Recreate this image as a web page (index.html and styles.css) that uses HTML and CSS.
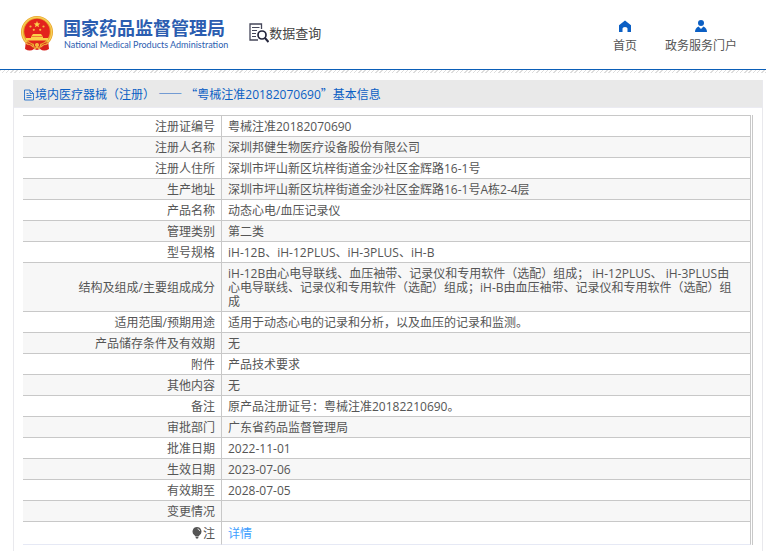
FILE: index.html
```html
<!DOCTYPE html>
<html lang="zh-CN">
<head>
<meta charset="utf-8">
<meta name="viewport" content="width=device-width, initial-scale=1">
<title>国家药品监督管理局 数据查询</title>
<link rel="stylesheet" href="styles.css">
</head>
<body>
<header class="site-header">
  <div class="brand">
    <svg class="emblem" viewBox="0 0 32 35" aria-hidden="true">
      <path d="M5 24 L4 33 Q9 36 13 33 L16 34 L19 33 Q23 36 28 33 L27 24Z" fill="#d8201c"/>
      <circle cx="16" cy="16" r="16" fill="#e9a52c"/>
      <circle cx="16" cy="16" r="14.6" fill="none" stroke="#f7cf58" stroke-width="1.2"/>
      <circle cx="16" cy="15.500" r="12.800" fill="#e3221d"/>
      <path d="M16 5l.9 2.300 2.400.1-1.900 1.500.7 2.400-2.100-1.400-2.100 1.400.7-2.400-1.900-1.500 2.400-.1z" fill="#fbd04a"/>
      <g fill="#f6b83e"><circle cx="9.500" cy="10.500" r="1.100"/><circle cx="12.800" cy="13.800" r="1.100"/><circle cx="19.200" cy="13.800" r="1.100"/><circle cx="22.500" cy="10.500" r="1.100"/></g>
      <path d="M12 18h8l1.500 2h-11zM10 20.500h12V22h5v2.500H5V22h5z" fill="#fbd04a"/>
      <path d="M5 26q5.500 1 8 5l-5 2.500Q8 29 5 26zM27 26q-5.500 1-8 5l5 2.500Q24 29 27 26z" fill="#d8201c"/>
      <circle cx="16" cy="29" r="2.600" fill="#f6b83e" stroke="#d8201c"/>
      <path d="M5 27.500q5 1 7.500 3.500M27 27.500q-5 1-7.500 3.500M13 33l3-1.500 3 1.500" fill="none" stroke="#f6b83e" stroke-width="1.200"/>
    </svg>
    <div class="brand-text">
      <span class="brand-cn">国家药品监督管理局</span>
      <span class="brand-en">National Medical Products Administration</span>
    </div>
  </div>
  <div class="section-title">
    <svg class="search-doc" viewBox="0 0 20 20" aria-hidden="true">
      <path d="M12.500 6V1H1v16h8" fill="none" stroke="#45475a" stroke-width="1.300"/>
      <path d="M3 4.500h7.500M3 7.500h5M3 10.500h4M3 13.500h4" stroke="#45475a" stroke-width="1.200"/>
      <circle cx="13" cy="12" r="4" fill="#fff" stroke="#25263c" stroke-width="1.700"/>
      <path d="M16 15l3.500 4" stroke="#25263c" stroke-width="2"/>
    </svg>
    <span>数据查询</span>
  </div>
  <nav class="site-nav">
    <a href="#"><svg viewBox="0 0 12 12" aria-hidden="true"><path d="M6 0.500l6 4.800V12H8.500V8.500Q8.500 7 6 7T3.500 8.500V12H0V5.300z" fill="#0b5fc4"/></svg>首页</a>
    <a href="#"><svg viewBox="0 0 12 12" aria-hidden="true"><circle cx="6" cy="3" r="3" fill="#0b5fc4"/><path d="M0 12q0-4 3.500-5.500L6 9l2.500-2.500Q12 8 12 12z" fill="#0b5fc4"/></svg>政务服务门户</a>
  </nav>
</header>

<main class="panel">
  <h1 class="panel-title">
    <svg viewBox="0 0 10 12" aria-hidden="true"><path d="M.5 1H6l3.500 3.500V11h-9zM6 1v3.500h3.500M2.500 6.500h5M2.500 8.500h5M2.500 4.500h2" fill="none" stroke="#0b5fc4" stroke-width=".8"/></svg>
    <span>境内医疗器械（注册） <span class="cjk">——</span> <span class="cjk">“</span>粤械注准20182070690<span class="cjk">”</span>基本信息</span>
  </h1>
  <div class="panel-body">
    <table class="details">
      <tbody>
        <tr><th scope="row">注册证编号</th><td>粤械注准20182070690</td></tr>
        <tr><th scope="row">注册人名称</th><td>深圳邦健生物医疗设备股份有限公司</td></tr>
        <tr><th scope="row">注册人住所</th><td>深圳市坪山新区坑梓街道金沙社区金辉路16-1号</td></tr>
        <tr><th scope="row">生产地址</th><td>深圳市坪山新区坑梓街道金沙社区金辉路16-1号A栋2-4层</td></tr>
        <tr><th scope="row">产品名称</th><td>动态心电/血压记录仪</td></tr>
        <tr><th scope="row">管理类别</th><td>第二类</td></tr>
        <tr><th scope="row">型号规格</th><td>iH-12B、iH-12PLUS、iH-3PLUS、iH-B</td></tr>
        <tr><th scope="row">结构及组成/主要组成成分</th><td>iH-12B由心电导联线、血压袖带、记录仪和专用软件（选配）组成； iH-12PLUS、 iH-3PLUS由心电导联线、记录仪和专用软件（选配）组成；iH-B由血压袖带、记录仪和专用软件（选配）组成</td></tr>
        <tr><th scope="row">适用范围/预期用途</th><td>适用于动态心电的记录和分析，以及血压的记录和监测。</td></tr>
        <tr><th scope="row">产品储存条件及有效期</th><td>无</td></tr>
        <tr><th scope="row">附件</th><td>产品技术要求</td></tr>
        <tr><th scope="row">其他内容</th><td>无</td></tr>
        <tr><th scope="row">备注</th><td>原产品注册证号：粤械注准20182210690。</td></tr>
        <tr><th scope="row">审批部门</th><td>广东省药品监督管理局</td></tr>
        <tr><th scope="row">批准日期</th><td>2022-11-01</td></tr>
        <tr><th scope="row">生效日期</th><td>2023-07-06</td></tr>
        <tr><th scope="row">有效期至</th><td>2028-07-05</td></tr>
        <tr><th scope="row">变更情况</th><td></td></tr>
        <tr class="note"><th scope="row"><svg viewBox="0 0 10 12" aria-hidden="true"><path d="M5 0a4.500 4.500 0 0 1 2.500 8.200L6.500 9.500h-3L2.500 8.200A4.500 4.500 0 0 1 5 0zM3.500 10h3L6 11.500H4z" fill="#555"/><path d="M5.500 1.800q2 .3 2.200 2.200" fill="none" stroke="#fff" stroke-width=".8"/></svg>注</th><td><a href="#">详情</a></td></tr>
      </tbody>
    </table>
  </div>
</main>
</body>
</html>
```
FILE: styles.css
```css
* {
  box-sizing: border-box;
}

body {
  display: flex;
  flex-direction: column;
  min-height: 100vh;
  margin: 0;
  background: #fff;
  color: #555;
  font: 12px/14px "Open Sans", "Noto Sans CJK SC", sans-serif;
}

a {
  text-decoration: none;
}

.cjk {
  font-family: "Noto Sans CJK SC", sans-serif;
}

.site-header {
  position: relative;
  display: flex;
  align-items: center;
  height: 73px;
  padding: 0 29px 7px 21px;
  background: repeating-linear-gradient(135deg, #ddd 0 1px, #fff 1px 3px) bottom / 100% 3px no-repeat;
}

.site-header::after {
  content: "";
  position: absolute;
  left: 0;
  right: 0;
  bottom: 3px;
  height: 1px;
  background: #0b5fb8;
}

.brand {
  display: flex;
  align-items: center;
  gap: 10px;
}

.emblem {
  width: 32px;
  height: 35px;
}

.brand-text {
  display: flex;
  flex-direction: column;
  padding-top: 2px;
  white-space: nowrap;
}

.brand-cn {
  color: #2b5db0;
  font-size: 18px;
  font-weight: 700;
  line-height: 22px;
}

.brand-en {
  padding-left: 1px;
  color: #2b5db0;
  font-family: Lato, sans-serif;
  font-size: 9px;
  line-height: 12px;
}

.section-title {
  display: flex;
  align-items: center;
  margin-left: 21px;
  color: #444;
  font-size: 13px;
  line-height: 20px;
}

.search-doc {
  width: 20px;
  height: 20px;
}

.site-nav {
  display: flex;
  gap: 28px;
  margin-left: auto;
}

.site-nav a {
  display: flex;
  flex-direction: column;
  align-items: center;
  gap: 6px;
  padding-top: 8px;
  color: #555;
  line-height: 16px;
}

.site-nav svg {
  width: 12px;
  height: 12px;
}

.panel {
  flex: 1;
  margin: 7px 3px 0 13px;
  border: 1px solid #e9e9ed;
  border-width: 0 1px;
}

.panel-title {
  display: flex;
  align-items: center;
  height: 28px;
  margin: 0;
  padding: 2px 10px 0;
  border-bottom: 1px solid #ebebf2;
  background: #e9e9e9;
  color: #0b5fc4;
  font-size: 12px;
  font-weight: 400;
  white-space: nowrap;
}

.panel-title svg {
  width: 10px;
  height: 12px;
  margin-right: 1px;
}

.panel-body {
  margin: 7px 9px 6px;
  border-right: 1px solid #c8c8c8;
  padding-right: 1px;
}

.details {
  width: 100%;
  border-collapse: separate;
  border-spacing: 0;
  border-top: 1px solid #c8c8c8;
}

.details th,
.details td {
  height: 21px;
  padding: 4px 6px 2px;
  border-right: 1px solid #c8c8c8;
  border-bottom: 1px solid #c8c8c8;
  font-weight: 400;
  text-align: left;
}

.details td {
  padding-right: 11px;
}

.details th {
  width: 199px;
  text-align: right;
}

.details tr:nth-child(even) {
  background: #f7f7f7;
}

.details .note th,
.details .note td {
  height: 23px;
  border-bottom-color: #e6e9f5;
}

.note svg {
  width: 10px;
  height: 12px;
  margin-right: 1px;
  vertical-align: -1px;
}

.note a {
  color: #409eff;
}
```
